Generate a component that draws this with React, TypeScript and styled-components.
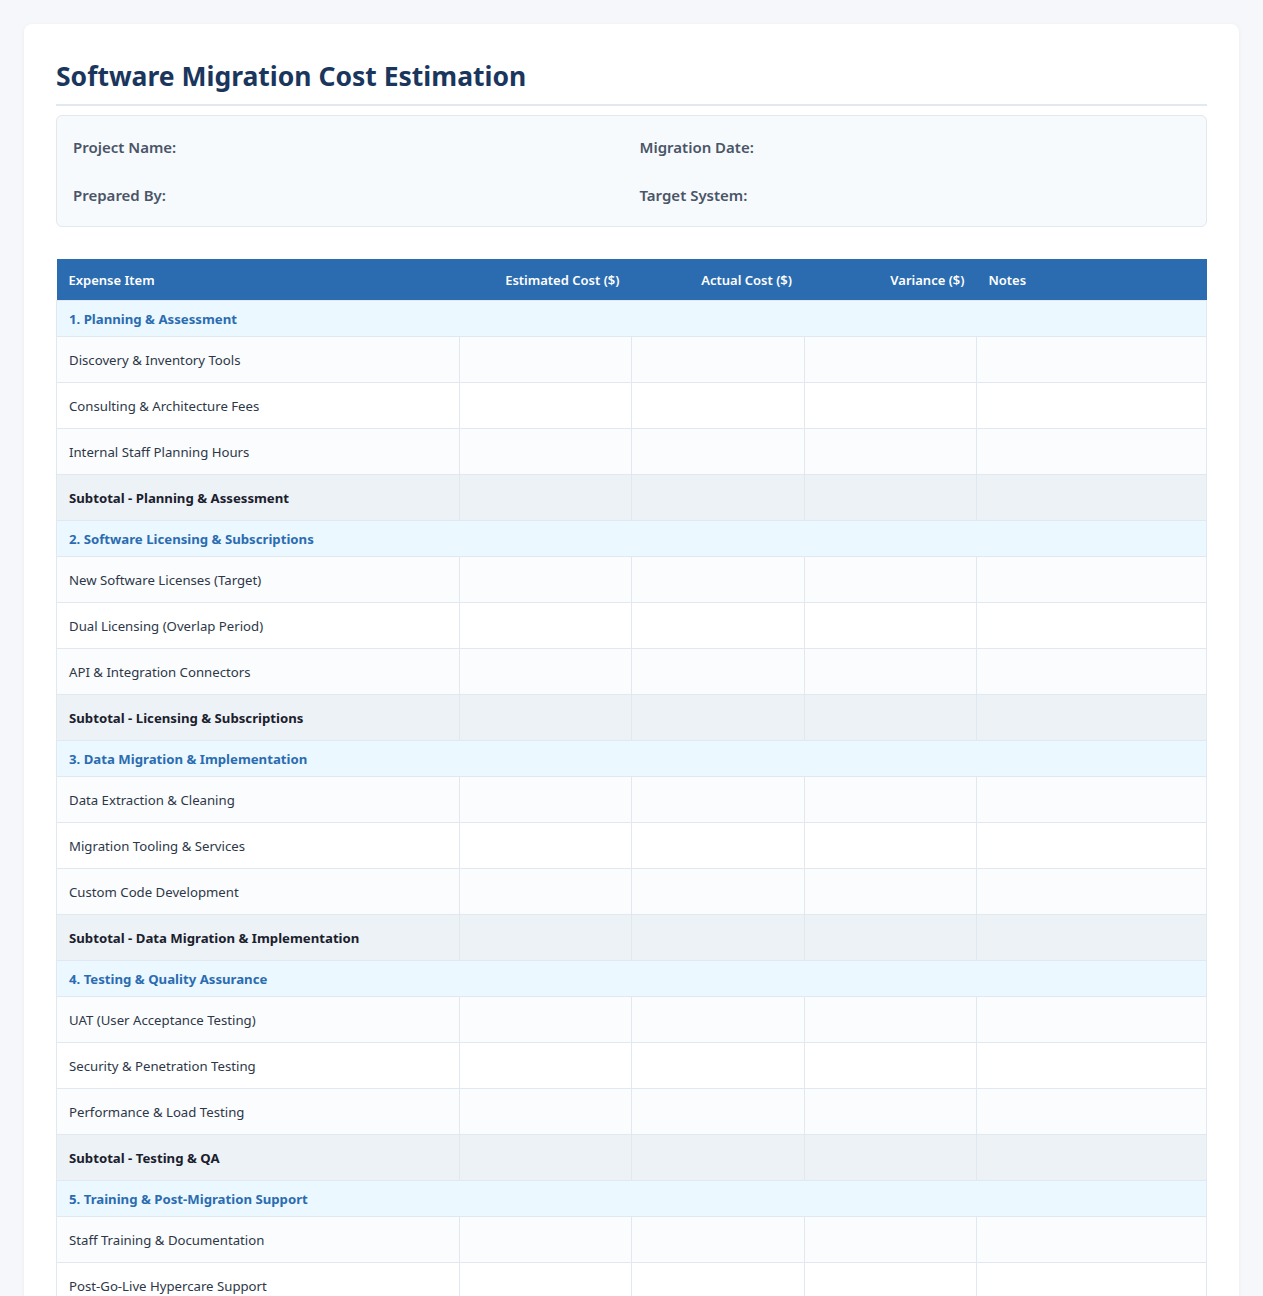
import React from "react";
import styled, { createGlobalStyle } from "styled-components";

const Global = createGlobalStyle`
  body { margin: 0; background: #f5f7fa; font-family: "Noto Sans", "Open Sans", sans-serif; color: #2d3748; }
`;

const Page = styled.div`padding: 24px 24px 40px;`;
const Card = styled.div`
  background: #fff; border-radius: 8px; padding: 32px 32px 40px;
  box-shadow: 0 1px 4px rgba(0,0,0,0.05);
`;
const Title = styled.h1`
  margin: 0; font-size: 26.5px; font-weight: 700; color: #1a365d;
  padding-bottom: 8px; border-bottom: 2px solid #e2e8f0; line-height: 40px;
`;
const Info = styled.div`
  margin-top: 9px; background: #f7fafc; border: 1px solid #e2e8f0; border-radius: 6px;
  padding: 19px 16px; display: grid; grid-template-columns: 1fr 1fr; row-gap: 24px; column-gap: 16px;
`;
const Label = styled.div`font-size: 15px; font-weight: 600; color: #4a5568; line-height: 24px;`;
const Table = styled.table`
  margin-top: 32px; width: 100%; border-collapse: collapse; font-size: 13.2px; table-layout: fixed;
`;
const Th = styled.th<{ $align?: string }>`
  background: #2b6cb0; color: #fff; font-weight: 600; text-align: ${p => p.$align || "left"};
  padding: 0 12px; height: 41px; font-size: 13px;
`;
const CatCell = styled.td`
  background: #ebf8ff; color: #2b6cb0; font-weight: 700; padding: 0 12px; height: 35px;
  border: 1px solid #e2e8f0;
`;
const Tr = styled.tr<{ $kind: "odd" | "even" | "sub" }>`
  background: ${p => (p.$kind === "sub" ? "#edf2f7" : p.$kind === "odd" ? "#fbfcfd" : "#fff")};
  font-weight: ${p => (p.$kind === "sub" ? 700 : 400)};
  color: ${p => (p.$kind === "sub" ? "#1a202c" : "#2d3748")};
`;
const Td = styled.td`border: 1px solid #e2e8f0; padding: 0 12px; height: 45px;`;

const sections = [
  { t: "1. Planning & Assessment", items: ["Discovery & Inventory Tools", "Consulting & Architecture Fees", "Internal Staff Planning Hours"], sub: "Subtotal - Planning & Assessment" },
  { t: "2. Software Licensing & Subscriptions", items: ["New Software Licenses (Target)", "Dual Licensing (Overlap Period)", "API & Integration Connectors"], sub: "Subtotal - Licensing & Subscriptions" },
  { t: "3. Data Migration & Implementation", items: ["Data Extraction & Cleaning", "Migration Tooling & Services", "Custom Code Development"], sub: "Subtotal - Data Migration & Implementation" },
  { t: "4. Testing & Quality Assurance", items: ["UAT (User Acceptance Testing)", "Security & Penetration Testing", "Performance & Load Testing"], sub: "Subtotal - Testing & QA" },
  { t: "5. Training & Post-Migration Support", items: ["Staff Training & Documentation", "Post-Go-Live Hypercare Support", "Change Management"], sub: "Subtotal - Training & Support" },
];

const Blank = () => (<><Td /><Td /><Td /><Td /></>);

export default function App() {
  return (
    <Page>
      <Global />
      <Card>
        <Title>Software Migration Cost Estimation</Title>
        <Info>
          <Label>Project Name:</Label>
          <Label>Migration Date:</Label>
          <Label>Prepared By:</Label>
          <Label>Target System:</Label>
        </Info>
        <Table>
          <colgroup>
            <col style={{ width: "35%" }} />
            <col style={{ width: "15%" }} />
            <col style={{ width: "15%" }} />
            <col style={{ width: "15%" }} />
            <col style={{ width: "20%" }} />
          </colgroup>
          <thead>
            <tr>
              <Th>Expense Item</Th>
              <Th $align="right">Estimated Cost ($)</Th>
              <Th $align="right">Actual Cost ($)</Th>
              <Th $align="right">Variance ($)</Th>
              <Th>Notes</Th>
            </tr>
          </thead>
          <tbody>
            {sections.map(s => (
              <React.Fragment key={s.t}>
                <tr><CatCell colSpan={5}>{s.t}</CatCell></tr>
                {s.items.map((it, i) => (
                  <Tr key={it} $kind={i % 2 === 0 ? "odd" : "even"}><Td>{it}</Td><Blank /></Tr>
                ))}
                <Tr $kind="sub"><Td>{s.sub}</Td><Blank /></Tr>
              </React.Fragment>
            ))}
          </tbody>
        </Table>
      </Card>
    </Page>
  );
}
